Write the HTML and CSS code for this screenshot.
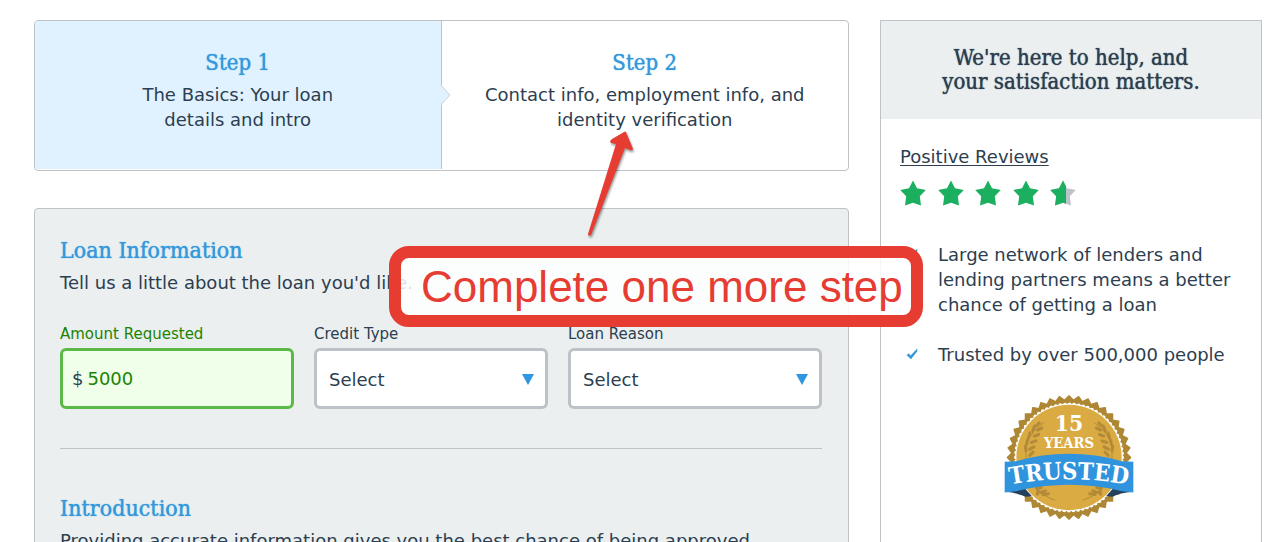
FILE: index.html
```html
<!DOCTYPE html>
<html lang="en">
<head>
<meta charset="utf-8">
<title>Loan request</title>
<link rel="stylesheet" href="styles.css">
</head>
<body>
<svg class="defs" aria-hidden="true">
  <symbol id="star" viewBox="0 0 26 26"><path d="M13 0.5 L17 8.3 L25.8 10 L19.8 16.3 L21 25.5 L13 22.8 L5 25.5 L6.2 16.3 L0.2 10 L9 8.3Z"/></symbol>
  <symbol id="check" viewBox="0 0 12 12"><path d="M0.5 7 L3 5.6 L4.6 7.4 L11.3 0.4 L11.3 3.2 L5 11.2Z"/></symbol>
  <symbol id="caret" viewBox="0 0 12 11"><path d="M0 0H12L6 11Z"/></symbol>
</svg>
<div class="page">
  <main class="main">
    <ol class="steps">
      <li class="step step-active">
        <h2 class="title">Step 1</h2>
        <p class="text">The Basics: Your loan<br>details and intro</p>
        <svg class="notch" viewBox="0 0 10 20"><path class="notch-fill" d="M0 0L9 10L0 20Z"/><path class="notch-line" d="M0.5 1L9 10L0.5 19"/></svg>
      </li>
      <li class="step">
        <h2 class="title">Step 2</h2>
        <p class="text">Contact info, employment info, and<br>identity verification</p>
      </li>
    </ol>
    <form class="panel">
      <h2 class="title">Loan Information</h2>
      <p class="text">Tell us a little about the loan you'd like.</p>
      <div class="fields">
        <div class="field field-valid">
          <label class="label" for="amount">Amount Requested</label>
          <div class="control">
            <span class="prefix">$</span>
            <input class="input" id="amount" type="text" value="5000">
          </div>
        </div>
        <div class="field">
          <label class="label" for="credit">Credit Type</label>
          <div class="control">
            <select class="select" id="credit"><option>Select</option></select>
            <svg class="caret"><use href="#caret"/></svg>
          </div>
        </div>
        <div class="field">
          <label class="label" for="reason">Loan Reason</label>
          <div class="control">
            <select class="select" id="reason"><option>Select</option></select>
            <svg class="caret"><use href="#caret"/></svg>
          </div>
        </div>
      </div>
      <hr class="rule">
      <h2 class="title">Introduction</h2>
      <p class="text">Providing accurate information gives you the best chance of being approved.</p>
    </form>
  </main>
  <aside class="side">
    <h2 class="side-head">We're here to help, and<br>your satisfaction matters.</h2>
    <div class="side-body">
      <a class="reviews" href="#">Positive Reviews</a>
      <div class="stars" role="img" aria-label="4.6 out of 5">
        <svg class="star"><use href="#star"/></svg>
        <svg class="star"><use href="#star"/></svg>
        <svg class="star"><use href="#star"/></svg>
        <svg class="star"><use href="#star"/></svg>
        <svg class="star" viewBox="0 0 26 26">
          <clipPath id="part"><rect width="16" height="26"/></clipPath>
          <use class="star-off" href="#star"/>
          <use href="#star" clip-path="url(#part)"/>
        </svg>
      </div>
      <ul class="points">
        <li class="point"><svg class="check"><use href="#check"/></svg><span>Large network of lenders and lending partners means a better chance of getting a loan</span></li>
        <li class="point"><svg class="check"><use href="#check"/></svg><span>Trusted by over 500,000 people</span></li>
      </ul>
      <svg class="badge" viewBox="40 42 390 380" role="img" aria-label="15 years trusted">
        <g fill="#ae8734" stroke="#ae8734" stroke-width="4" stroke-linejoin="round">
          <path id="tooth" d="M235 47L420 232L235 417L50 232Z"/>
          <use href="#tooth" transform="rotate(9 235 232)"/>
          <use href="#tooth" transform="rotate(18 235 232)"/>
          <use href="#tooth" transform="rotate(27 235 232)"/>
          <use href="#tooth" transform="rotate(36 235 232)"/>
          <use href="#tooth" transform="rotate(45 235 232)"/>
          <use href="#tooth" transform="rotate(54 235 232)"/>
          <use href="#tooth" transform="rotate(63 235 232)"/>
          <use href="#tooth" transform="rotate(72 235 232)"/>
          <use href="#tooth" transform="rotate(81 235 232)"/>
        </g>
        <circle cx="235" cy="232" r="161" fill="#fff"/>
        <circle cx="235" cy="232" r="159" fill="none" stroke="#fff" stroke-width="12" stroke-linecap="round" stroke-dasharray="0 13.88"/>
        <circle cx="235" cy="232" r="158" fill="#dbab43"/>
        <g id="laurel" fill="none" stroke="#b38b38" stroke-width="9" stroke-linecap="round">
          <path stroke-width="3" d="M158 128Q96 170 106 236M128 312Q150 346 192 360"/>
          <path d="M138 136L146 128M126 153L132 138M113 174L118 158M108 192L110 180M106 212L104 198M141 150L153 144M131 168L144 163M122 187L136 182M117 207L130 200M117 226L127 216"/>
          <path d="M138 324L152 322M149 337L164 332M142 330L140 342M157 343L173 341"/>
        </g>
        <use href="#laurel" transform="matrix(-1 0 0 1 470 0)"/>
        <path fill="#24405c" d="M42 335L100 322L124 348L104 350Q84 338 42 335ZM428 335L370 322L346 348L366 350Q386 338 428 335Z"/>
        <path fill="#2f93dd" d="M42 245L76 243Q155 221 235 221T394 243L428 245V337L394 333Q315 314 235 314T76 333L42 337Z"/>
        <path id="arc" fill="none" d="M42 317Q235 277 428 317"/>
        <g class="badge-text">
          <text x="235" y="153" font-size="68">15</text>
          <text x="235" y="205" font-size="44">YEARS</text>
          <text font-size="71"><textPath href="#arc" startOffset="50%">TRUSTED</textPath></text>
        </g>
      </svg>
    </div>
  </aside>
  <svg class="arrow" viewBox="0 0 56 112">
    <path d="M43 3L50 20Q49 22 47 21L42 19L8 106Q5 108 5 105L33 15L28 14Q26 12 29 10L41 3Q42 2 43 3Z"/>
  </svg>
  <p class="callout">Complete one more step</p>
</div>
</body>
</html>
```
FILE: styles.css
```css
* { box-sizing: border-box; }
body {
  margin: 0;
  background: #fff;
  color: #2c3e50;
  font: 18px/25px "DejaVu Sans", Verdana, sans-serif;
}
h2, p, ol, ul { margin: 0; padding: 0; list-style: none; font-weight: normal; }
.defs { position: absolute; width: 0; height: 0; }
.page {
  position: relative;
  display: grid;
  grid-template-columns: minmax(0, 815fr) minmax(0, 382fr);
  gap: 31px;
  height: 100vh;
  overflow: hidden;
  padding: 20px 22px 0 34px;
}
.title, .side-head {
  font-family: "DejaVu Serif Condensed", "DejaVu Serif", serif;
  font-size: 22px;
  line-height: 24px;
  text-shadow: 0 0 1px currentColor;
}
.title { color: #3498db; margin-bottom: 7px; }
.panel .title { font-size: 23px; margin-bottom: 8px; }
.steps {
  display: grid;
  grid-template-columns: 1fr 1fr;
  margin-bottom: 37px;
  padding-bottom: 1px;
  border: 1px solid #bdc3c7;
  border-radius: 4px;
  text-align: center;
}
.step { position: relative; padding: 30px 20px 37px; }
.step-active { background: #e0f2ff; border-right: 1px solid #bdc3c7; border-radius: 3px 0 0 3px; }
.notch { position: absolute; left: 100%; top: 64px; width: 10px; height: 20px; }
.notch-fill { fill: #e0f2ff; }
.notch-line { fill: none; stroke: #c8d3dc; }
.panel {
  padding: 29px 26px 40px 25px;
  background: #ebeff0;
  border: 1px solid #bdc3c7;
  border-radius: 4px;
}
.fields {
  display: grid;
  grid-template-columns: minmax(0, 234fr) minmax(0, 234fr) minmax(0, 254fr);
  gap: 20px;
  margin-top: 29px;
}
.label { display: block; margin-bottom: 4px; font-size: 15px; line-height: 20px; }
.control {
  position: relative;
  display: flex;
  align-items: center;
  height: 61px;
  background: #fff;
  border: 3px solid #bdc1c8;
  border-radius: 6px;
}
.field-valid .label, .field-valid .input { color: #208300; }
.field-valid .control { background: #efffea; border-color: #5cb947; }
.prefix { padding: 0 4px 0 9px; }
.input, .select {
  flex: 1;
  min-width: 0;
  height: 100%;
  padding: 0;
  border: 0;
  background: none;
  color: inherit;
  font: inherit;
  appearance: none;
}
.select { padding: 2px 12px 0; }
.caret { position: absolute; right: 11px; top: 23px; width: 12px; height: 11px; fill: #2f96e0; pointer-events: none; }
.rule { margin: 39px 0 47px; border: 0; border-top: 1px solid #bdc3c7; }
.side { border: 1px solid #bdc3c7; border-bottom: 0; }
.side-head { padding: 25px 0; background: #ebeff0; text-align: center; }
.side-body { padding: 25px 19px; }
.reviews { display: block; color: inherit; text-underline-offset: 2px; }
.stars { display: flex; justify-content: space-between; width: 176px; margin: 11px 0 36px; }
.star { width: 26px; height: 26px; fill: #1caf60; }
.star-off { fill: #bdc3c9; }
.point { display: grid; grid-template-columns: 12px 1fr; gap: 20px; padding-left: 6px; margin-bottom: 25px; }
.check { width: 12px; height: 12px; margin-top: 6px; fill: #3498db; }
.badge { display: block; width: 130px; height: 127px; margin: 27px auto 0 104px; }
.badge-text {
  fill: #fff;
  font-family: "DejaVu Serif Condensed", "DejaVu Serif", serif;
  font-weight: bold;
  text-anchor: middle;
}
.arrow {
  position: absolute;
  left: 583px;
  top: 129px;
  width: 56px;
  height: 112px;
  fill: #e63c32;
  filter: drop-shadow(1px 2px 1px #0006);
}
.callout {
  position: absolute;
  left: 389px;
  top: 246px;
  padding: 4px 8px 4px 20px;
  border: 12px solid #e63c32;
  border-radius: 20px;
  background: #ffffffd9;
  color: #e63c32;
  font: 44px/49px "Liberation Sans", Arial, sans-serif;
  white-space: nowrap;
}
```
